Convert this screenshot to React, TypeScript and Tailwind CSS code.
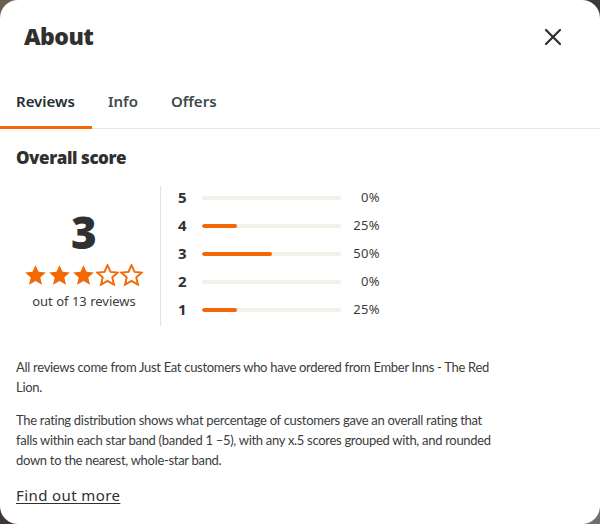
import React from 'react';
import { X } from 'lucide-react';

const rows = [
  { star: 5, pct: 0 },
  { star: 4, pct: 25 },
  { star: 3, pct: 50 },
  { star: 2, pct: 0 },
  { star: 1, pct: 25 },
];

function Star({ filled }: { filled: boolean }) {
  return (
    <svg width="23" height="22" viewBox="0 0 24 23">
      <path
        d="M12 1.2l3.2 7 7.6.7-5.8 5.1 1.8 7.6L12 17.7l-6.8 3.9 1.8-7.6-5.8-5.1 7.6-.7z"
        fill={filled ? '#f36805' : 'white'}
        stroke="#f36805"
        strokeWidth={filled ? 0 : 2}
        strokeLinejoin="miter"
      />
    </svg>
  );
}

export default function App() {
  return (
    <div className="w-[600px] h-[524px] bg-[linear-gradient(135deg,#6e6050,#3a3434_50%,#707070)] overflow-hidden">
      <div className="w-[600px] h-[524px] bg-white rounded-[18px] font-['Noto_Sans',sans-serif] text-[#3c3c3c]">
        {/* Header */}
        <div className="flex items-center justify-between pl-6 pr-[33px] h-[72px]">
          <h2 className="font-['Open_Sans',sans-serif] text-[23px] font-extrabold text-[#303030] tracking-tight">About</h2>
          <X size={28} strokeWidth={1.9} className="text-[#303030] mt-[2px]" />
        </div>

        {/* Tabs */}
        <div className="flex border-b border-[#e6e6e6] mt-[18px]">
          <div className="w-[92px] pl-4 pb-[13px] border-b-[3px] border-[#f36805] -mb-px text-[15px] font-semibold text-[#242e30]">Reviews</div>
          <div className="ml-4 pb-[13px] text-[15px] font-semibold text-[#3f4a4c]">Info</div>
          <div className="ml-[33px] pb-[13px] text-[15px] font-semibold text-[#3f4a4c]">Offers</div>
        </div>

        {/* Overall score */}
        <div className="px-4 pt-[17px]">
          <h3 className="font-['Open_Sans',sans-serif] text-[17px] font-extrabold text-[#303030] leading-6 tracking-tight">Overall score</h3>

          <div className="flex mt-[16px]">
            <div className="w-[144px] pr-[8px] flex flex-col items-center pt-[24px]">
              <div className="font-['Open_Sans',sans-serif] text-[44px] font-extrabold leading-[44px] text-[#303030]">3</div>
              <div className="flex gap-[1px] mt-[10px] -ml-[2px]">
                <Star filled />
                <Star filled />
                <Star filled />
                <Star filled={false} />
                <Star filled={false} />
              </div>
              <div className="text-[13px] mt-[6px] text-[#3c3c3c]">out of 13 reviews</div>
            </div>

            <div className="border-l border-[#e2e2e2] pl-[17px] h-[140px] flex flex-col gap-[6px] pt-[1px]">
              {rows.map((r) => (
                <div key={r.star} className="flex items-center h-[22px]">
                  <span className="w-[24px] font-['Open_Sans',sans-serif] text-[15px] font-bold text-[#303030]">{r.star}</span>
                  <div className="w-[139px] h-[4px] rounded-full bg-[#f3efe9] overflow-hidden">
                    <div className="h-full rounded-full bg-[#f36805]" style={{ width: `${r.pct}%` }} />
                  </div>
                  <span className="w-[39px] text-right text-[13px] text-[#3c3c3c] tracking-wide">{r.pct}%</span>
                </div>
              ))}
            </div>
          </div>

          <div className="mt-[31px] max-w-[480px] font-['Lato',sans-serif] text-[13px] tracking-[-0.3px] leading-5 text-[#3c3c3c]">
            <p>All reviews come from Just Eat customers who have ordered from Ember Inns - The Red Lion.</p>
            <p className="mt-[13px]">
              The rating distribution shows what percentage of customers gave an overall rating that falls within each star band (banded 1 –5), with any x.5 scores grouped with, and rounded down to the nearest, whole-star band.
            </p>
          </div>
          <a className="inline-block mt-[14px] text-[15px] tracking-[0.4px] underline underline-offset-2 text-[#303030]">Find out more</a>
        </div>
      </div>
    </div>
  );
}
